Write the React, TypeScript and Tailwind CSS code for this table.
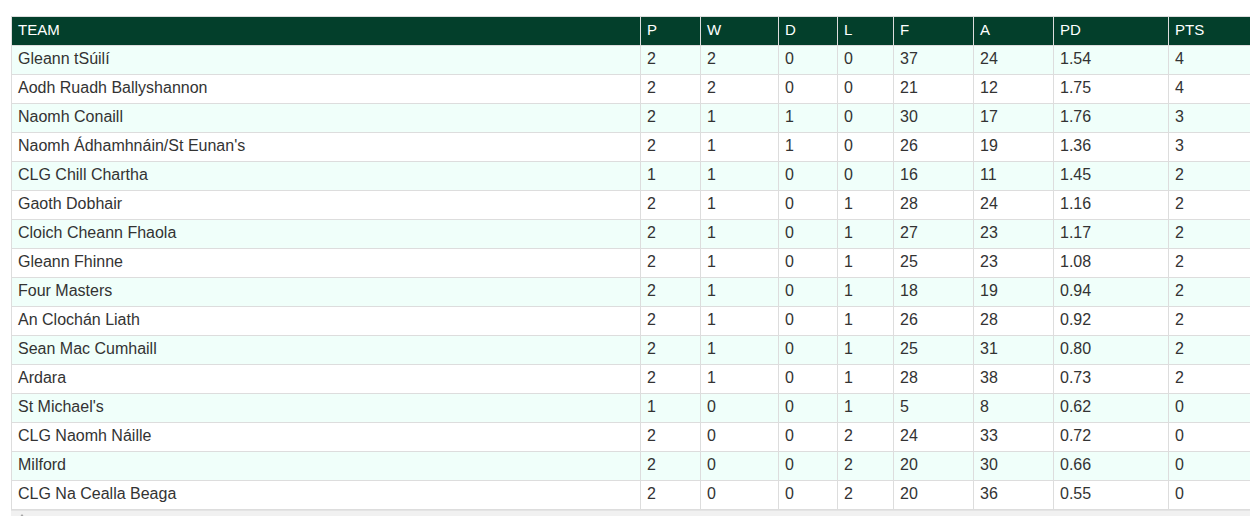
const columns = [
  { key: "team", label: "TEAM", w: "w-[629px]" },
  { key: "p", label: "P", w: "w-[60px]" },
  { key: "w", label: "W", w: "w-[78px]" },
  { key: "d", label: "D", w: "w-[59px]" },
  { key: "l", label: "L", w: "w-[56px]" },
  { key: "f", label: "F", w: "w-[80px]" },
  { key: "a", label: "A", w: "w-[80px]" },
  { key: "pd", label: "PD", w: "w-[115px]" },
  { key: "pts", label: "PTS", w: "w-[83px]" },
];

const rows: (string | number)[][] = [
  ["Gleann tSúilí", 2, 2, 0, 0, 37, 24, "1.54", 4],
  ["Aodh Ruadh Ballyshannon", 2, 2, 0, 0, 21, 12, "1.75", 4],
  ["Naomh Conaill", 2, 1, 1, 0, 30, 17, "1.76", 3],
  ["Naomh Ádhamhnáin/St Eunan's", 2, 1, 1, 0, 26, 19, "1.36", 3],
  ["CLG Chill Chartha", 1, 1, 0, 0, 16, 11, "1.45", 2],
  ["Gaoth Dobhair", 2, 1, 0, 1, 28, 24, "1.16", 2],
  ["Cloich Cheann Fhaola", 2, 1, 0, 1, 27, 23, "1.17", 2],
  ["Gleann Fhinne", 2, 1, 0, 1, 25, 23, "1.08", 2],
  ["Four Masters", 2, 1, 0, 1, 18, 19, "0.94", 2],
  ["An Clochán Liath", 2, 1, 0, 1, 26, 28, "0.92", 2],
  ["Sean Mac Cumhaill", 2, 1, 0, 1, 25, 31, "0.80", 2],
  ["Ardara", 2, 1, 0, 1, 28, 38, "0.73", 2],
  ["St Michael's", 1, 0, 0, 1, 5, 8, "0.62", 0],
  ["CLG Naomh Náille", 2, 0, 0, 2, 24, 33, "0.72", 0],
  ["Milford", 2, 0, 0, 2, 20, 30, "0.66", 0],
  ["CLG Na Cealla Beaga", 2, 0, 0, 2, 20, 36, "0.55", 0],
];

export default function App() {
  return (
    <div className="w-[1250px] h-[516px] overflow-hidden bg-white font-['Liberation_Sans',Arial,sans-serif] text-[#333]">
      <div className="ml-[11px] mt-[16px] w-[1240px]">
        <table className="table-fixed border-collapse w-[1240px]">
          <thead>
            <tr className="bg-[#033f2b] text-white">
              {columns.map((c) => (
                <th
                  key={c.key}
                  className={`${c.w} border border-[#ddd] px-[6px] pt-[3px] pb-[5px] h-[29px] text-left font-normal text-[15px] leading-[20px]`}
                >
                  {c.label}
                </th>
              ))}
            </tr>
          </thead>
          <tbody>
            {rows.map((r, i) => (
              <tr key={i} className={i % 2 === 0 ? "bg-[#f0fffa]" : "bg-white"}>
                {r.map((v, j) => (
                  <td
                    key={j}
                    className="border border-[#ddd] px-[6px] pt-[3px] pb-[5px] h-[29px] text-[16px] leading-[20px] whitespace-nowrap"
                  >
                    {v}
                  </td>
                ))}
              </tr>
            ))}
          </tbody>
        </table>
        <div className="h-[17px] bg-[#f1f1f1] border-t border-[#e4e4e4] flex pl-[8px] pt-[3px]">
          <span className="w-0 h-0 border-l-[3px] border-r-[3px] border-b-[4px] border-l-transparent border-r-transparent border-b-[#a3a3a3]" />
        </div>
      </div>
    </div>
  );
}
